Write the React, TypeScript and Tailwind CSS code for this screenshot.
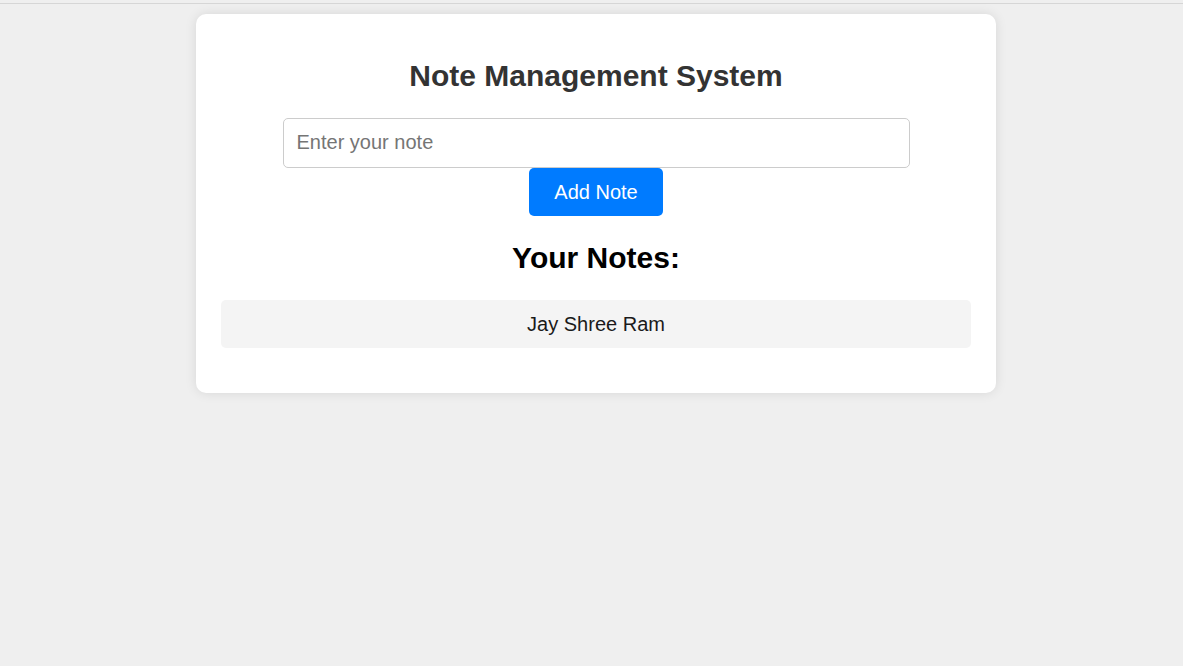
import { useState } from 'react';

export default function App() {
  const [note, setNote] = useState('');
  const [notes, setNotes] = useState<string[]>(['Jay Shree Ram']);

  const addNote = () => {
    if (!note.trim()) return;
    setNotes([...notes, note.trim()]);
    setNote('');
  };

  return (
    <div className="min-h-screen bg-[#efefef] font-['Liberation_Sans',Arial,sans-serif] pt-[3px]">
      <div className="border-t border-[#d6d6d6]" />
      <div className="pl-[9px] pt-[10px]">
        {/* Card */}
        <div className="mx-auto w-[800px] bg-white rounded-[10px] shadow-[0_0_12px_rgba(0,0,0,0.1)] px-[25px] pt-[25px] pb-[25px] text-center">
          <h1 className="mt-[20px] mb-[20px] text-[30px] leading-[34.5px] font-bold text-[#333]">Note Management System</h1>
          <div className="flex flex-col items-center">
            <input
              className="mt-[4px] w-[627px] h-[50px] px-[13px] border border-[#ccc] rounded-[5px] text-[20px] text-[#222] placeholder:text-[#757575] outline-none"
              placeholder="Enter your note"
              type="text"
              value={note}
              onChange={(e) => setNote(e.target.value)}
            />
            <button
              onClick={addNote}
              className="h-[48px] px-[25px] bg-[#007bff] text-white text-[20px] rounded-[5px] cursor-pointer"
            >
              Add Note
            </button>
          </div>
          <h2 className="mt-[25px] mb-[25px] text-[30px] leading-[34.5px] font-bold text-black">Your Notes:</h2>
          <ul className="mb-[20px] flex flex-col gap-[10px]">
            {notes.map((n, i) => (
              <li key={i} className="h-[48px] flex items-center justify-center bg-[#f4f4f4] rounded-[5px] text-[20px] text-[#1a1a1a]">
                {n}
              </li>
            ))}
          </ul>
        </div>
      </div>
    </div>
  );
}
